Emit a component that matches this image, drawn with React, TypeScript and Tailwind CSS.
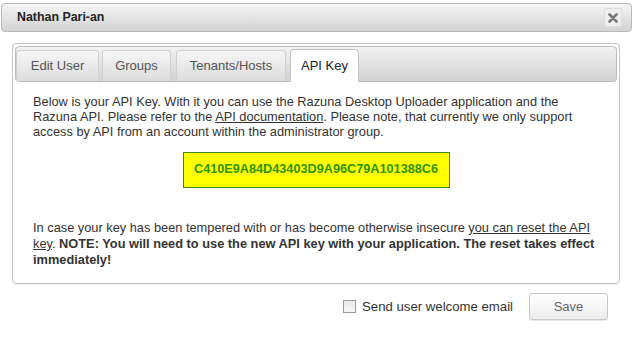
import type React from "react";

// タブの定義
const TABS = [
    { label: "Edit User", width: "w-[83px]", gap: "ml-0" },
    { label: "Groups", width: "w-[69px]", gap: "ml-[3px]" },
    { label: "Tenants/Hosts", width: "w-[110px]", gap: "ml-[5px]" },
    { label: "API Key", width: "w-[69px]", gap: "ml-[4px]", active: true },
];

const API_KEY = "C410E9A84D43403D9A96C79A101388C6";

export default function App() {
    return (
        <div className="w-[633px] h-[342px] bg-white overflow-hidden font-['Liberation_Sans',Arial,sans-serif] text-[#333]">
            <TitleBar title="Nathan Pari-an" />

            <div className="ml-[12px] mr-[13px] mt-[11px] h-[241px] border border-[#c4c4c4] rounded-[4px] p-[2px] shadow-[0_1px_1px_rgba(0,0,0,0.08)]">
                <TabBar />

                <div className="pl-[18px] pt-[12px] text-[12.8px] leading-[15px]">
                    <p className="w-[585px]">
                        Below is your API Key. With it you can use the Razuna Desktop Uploader application and the
                        <br />
                        Razuna API. Please refer to the <a className="underline">API documentation</a>. Please note, that
                        currently we only support
                        <br />
                        access by API from an account within the administrator group.
                    </p>
                </div>

                <div className="flex justify-center mt-[13px]">
                    <div className="w-[267px] h-[36px] flex items-center justify-center bg-[#ffff00] border border-[#3d8a1a] text-[#2f9400] font-bold text-[12.7px]">
                        {API_KEY}
                    </div>
                </div>

                <div className="pl-[18px] mt-[32px] text-[12.8px] leading-[16px]">
                    <p className="w-[590px]">
                        In case your key has been tempered with or has become otherwise insecure{" "}
                        <a className="underline">you can reset the API</a>
                        <br />
                        <a className="underline">key</a>. <b>NOTE: You will need to use the new API key with your application. The reset takes effect</b>
                        <br />
                        <b>immediately!</b>
                    </p>
                </div>
            </div>

            <div className="flex items-center justify-end mt-[9px] pr-[25px]">
                <label className="flex items-center text-[13.2px] text-[#333]">
                    <span className="w-[13px] h-[13px] border border-[#9a9a9a] bg-gradient-to-b from-[#e6e6e6] to-[#fafafa] shadow-[inset_0_0_0_1px_#f4f4f4]" />
                    <span className="ml-[6px]">Send user welcome email</span>
                </label>
                <button
                    type="button"
                    className="ml-[16px] w-[79px] h-[27px] rounded-[3px] border border-[#c8c8c8] bg-gradient-to-b from-white to-[#ececec] text-[13px] text-[#666] shadow-[0_1px_1px_rgba(0,0,0,0.1)]"
                >
                    Save
                </button>
            </div>
        </div>
    );
}

const TitleBar = ({ title }: { title: string }) => {
    return (
        <div className="mx-[1px] mt-[3px] h-[29px] flex items-center justify-between pl-[15px] pr-[9px] rounded-[4px] border border-[#b9b9b9] bg-gradient-to-b from-[#f5f5f5] to-[#d3d3d3]">
            <span className="font-bold text-[12.4px] text-[#222]">{title}</span>
            <button
                type="button"
                className="w-[18px] h-[19px] flex items-center justify-center rounded-[2px] border border-[#dcdcdc] bg-[#eeeeee] text-[#777]"
            >
                <svg width="10" height="10" viewBox="0 0 10 10">
                    <path d="M1.5 1.5 L8.5 8.5 M8.5 1.5 L1.5 8.5" stroke="currentColor" strokeWidth="2.6" strokeLinecap="round" />
                </svg>
            </button>
        </div>
    );
};

const TabBar = () => {
    return (
        <div className="h-[36px] flex items-end rounded-[4px] border border-[#bcbcbc] bg-gradient-to-b from-[#f2f2f2] to-[#d2d2d2]">
            {TABS.map((tab) => (
                <Tab key={tab.label} tab={tab} />
            ))}
        </div>
    );
};

const Tab = ({ tab }: { tab: (typeof TABS)[number] }) => {
    const base = `${tab.width} ${tab.gap} flex items-center justify-center rounded-t-[4px] border border-b-0 text-[13px]`;
    if (tab.active) {
        return (
            <div className={`${base} h-[33px] -mb-[1px] bg-white border-[#c4c4c4] text-[#222]`}>
                {tab.label}
            </div>
        );
    }
    return (
        <div className={`${base} h-[31px] bg-gradient-to-b from-[#f6f6f6] to-[#dcdcdc] border-[#d0d0d0] text-[#555]`}>
            {tab.label}
        </div>
    );
};

// unused helper type to keep React import meaningful
export type Props = React.ComponentProps<"div">;
